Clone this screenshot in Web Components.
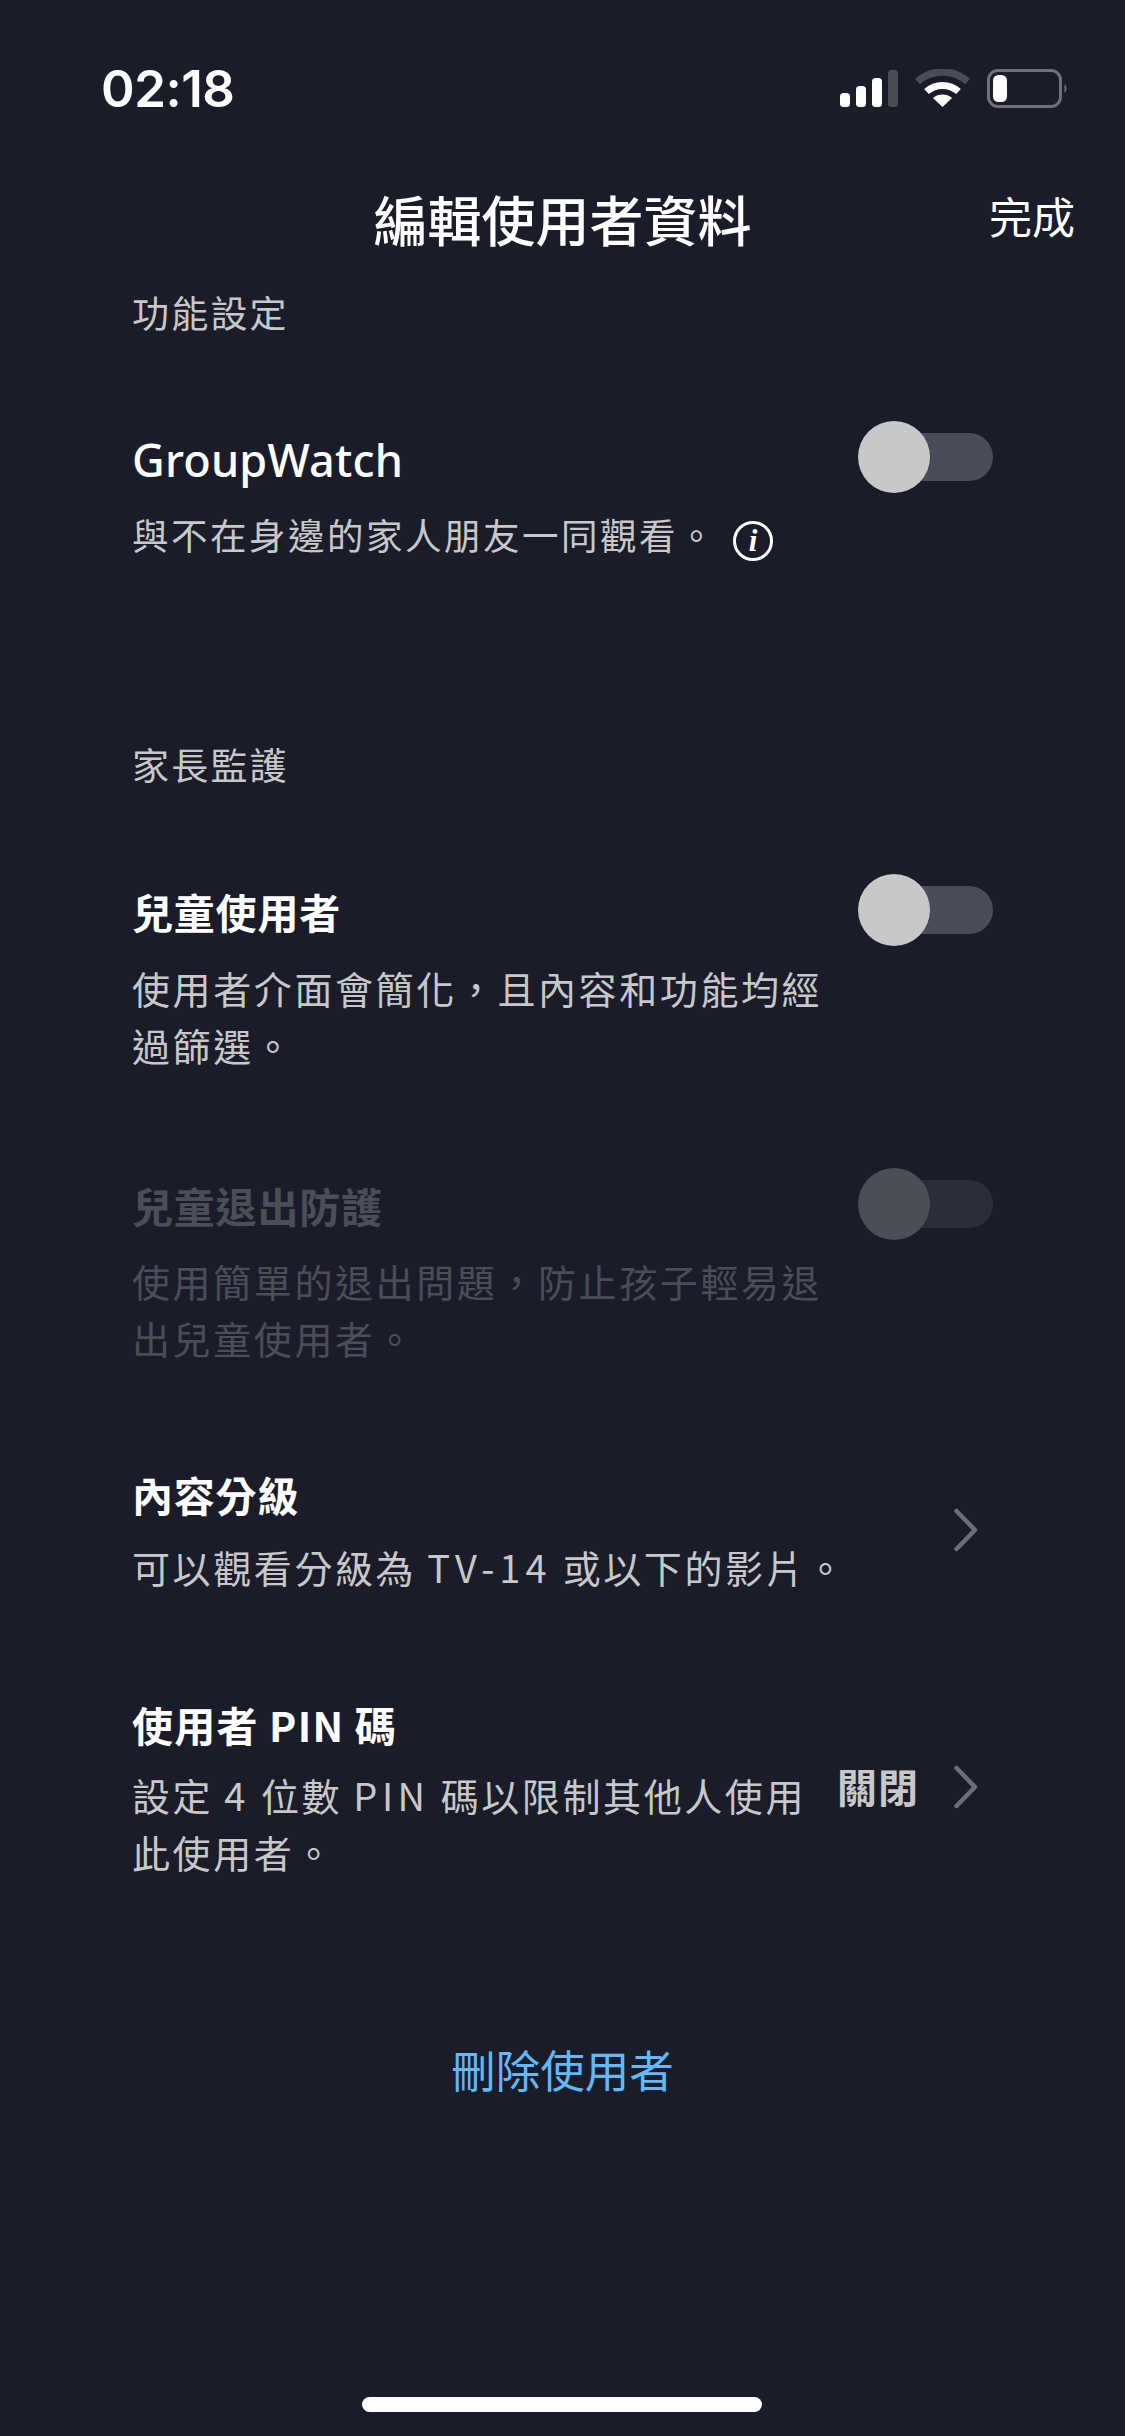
<!DOCTYPE html>
<html lang="zh-Hant"><head><meta charset="utf-8">
<style>
html,body{margin:0;padding:0;background:#1a1d29;}
body{width:1125px;height:2436px;overflow:hidden;font-family:"Noto Sans CJK TC","Noto Sans",sans-serif;color:#fff;}
</style></head><body>
<profile-screen>
  <status-bar></status-bar>
  <nav-header title="編輯使用者資料" action="完成"></nav-header>
  <section-label style="margin-top:19px">功能設定</section-label>
  <setting-row style="margin-top:89px;--gap:16px;--tg:-9px" toggle row-title="GroupWatch" latin>與不在身邊的家人朋友一同觀看。<info-icon></info-icon></setting-row>
  <section-label style="margin-top:173px">家長監護</section-label>
  <setting-row style="margin-top:88px;--gap:18px" toggle row-title="兒童使用者">使用者介面會簡化，且內容和功能均經<br>過篩選。</setting-row>
  <setting-row style="margin-top:102px;--gap:17px" toggle disabled row-title="兒童退出防護">使用簡單的退出問題，防止孩子輕易退<br>出兒童使用者。</setting-row>
  <setting-row style="margin-top:98px;--gap:14px" chevron row-title="內容分級">可以觀看分級為 <span style="letter-spacing:5px">TV-14</span> 或以下的影片。</setting-row>
  <setting-row style="margin-top:99px;--gap:12px;--tls:1.200px" chevron value="關閉" row-title="使用者 PIN 碼">設定 <span style="letter-spacing:4.500px">4</span> 位數 <span style="letter-spacing:4.500px">PIN</span> 碼以限制其他人使用<br>此使用者。</setting-row>
  <delete-action>刪除使用者</delete-action>
  <home-indicator></home-indicator>
</profile-screen>
<script>
function def(name, html){
  customElements.define(name, class extends HTMLElement{
    connectedCallback(){
      if(this.shadowRoot) return;
      const r=this.attachShadow({mode:'open'});
      r.innerHTML=typeof html==='function'?html(this):html;
    }
  });
}
def('profile-screen',`<style>:host{display:flex;flex-direction:column;height:2436px;position:relative}</style><slot></slot>`);
def('status-bar',`<style>
:host{display:flex;justify-content:space-between;align-items:center;height:175px;box-sizing:border-box;padding:3px 53px 0 101px;}
.t{font:600 51px/60px Inter,Roboto,sans-serif;letter-spacing:-.5px}
svg{display:block}
</style><span class="t">02:18</span>
<svg width="232" height="40" viewBox="0 -1 232 40">
<g fill="#fff"><rect x="0" y="23" width="10" height="14" rx="3.500"/><rect x="16" y="16" width="10" height="21" rx="3.500"/><rect x="32" y="8" width="10" height="29" rx="3.500"/></g>
<rect x="48" y="0" width="10" height="37" rx="3.500" fill="#4a4c56"/>
<path d="M77.500 11.500a38 38 0 0 1 50 0" fill="none" stroke="#4a4c56" stroke-width="7.500"/>
<path d="M86.500 21.500a24 24 0 0 1 32 0" fill="none" stroke="#fff" stroke-width="7"/>
<path d="M102.500 37l-9.500-9a15 15 0 0 1 19 0z" fill="#fff"/>
<rect x="148.500" y="0.500" width="72" height="36" rx="9.500" fill="none" stroke="#6f7079" stroke-width="3"/>
<rect x="153" y="5" width="14" height="27" rx="5.500" fill="#fff"/>
<path d="M224.500 14a6 6 0 0 1 0 9z" fill="#6f7079"/>
</svg>`);
def('nav-header',h=>`<style>
:host{display:grid;grid-template-columns:1fr auto 1fr;align-items:center;height:90px;}
.t{font-size:54px;line-height:90px;font-weight:500;grid-column:2;margin-top:-2px}
.a{font-size:43px;line-height:90px;justify-self:end;padding-right:50px;margin-top:-11px}
</style><span class="t">${h.getAttribute('title')}</span><span class="a">${h.getAttribute('action')}</span>`);
def('section-label',`<style>:host{display:block;padding-left:132px;font-size:37px;line-height:57px;letter-spacing:2.200px;color:#c8c8c8}</style><slot></slot>`);
def('toggle-switch',`<style>
:host{display:block;position:relative;width:135px;height:72px;}
.track{position:absolute;right:0;top:12px;width:115px;height:48px;border-radius:24px;background:var(--track,#4a4c5a)}
.knob{position:absolute;left:0;top:0;width:72px;height:72px;border-radius:50%;background:var(--knob,#c8c8c8)}
</style><div class="track"></div><div class="knob"></div>`);
def('chevron-icon',`<style>:host{display:block;width:28px;height:46px}svg{display:block}</style><svg width="28" height="46" viewBox="0 0 28 46"><path d="M4.500 4l18.500 19L4.500 42" fill="none" stroke="#6c6d76" stroke-width="4.500" stroke-linecap="round" stroke-linejoin="round"/></svg>`);
def('info-icon',`<style>
:host{display:inline-flex;align-items:center;justify-content:center;box-sizing:border-box;width:40px;height:40px;border:3px solid #fff;border-radius:50%;margin-left:16px;vertical-align:-1px;
font:italic 700 31px/1 "Liberation Serif",serif;color:#fff;letter-spacing:0}
</style>i`);
def('setting-row',h=>{
  const dis=h.hasAttribute('disabled'), latin=h.hasAttribute('latin'), tog=h.hasAttribute('toggle');
  const right=tog
    ?`<toggle-switch class="tg"></toggle-switch>`
    :`<div class="r">${h.hasAttribute('value')?`<span class="v">${h.getAttribute('value')}</span>`:''}<chevron-icon></chevron-icon></div>`;
  return `<style>
:host{display:flex;padding:0 132px;${dis?'--track:#2b2d38;--knob:#4b4e57;':''}}
.m{display:flex;flex-direction:column;gap:var(--gap,14px);flex:1;min-width:0}
.ti{font-size:${latin?'45px':'41px'};line-height:60px;font-weight:${latin?500:700};letter-spacing:${latin?'.2px':'var(--tls,.8px)'};color:${dis?'#4b4e57':'#fff'};
 font-family:${latin?'"Noto Sans",':''}"Noto Sans CJK TC",sans-serif}
.d{font-size:${latin?'36.500px':'38px'};line-height:57px;letter-spacing:${latin?'2.500px':'2.600px'};color:${dis?'#4b4e57':'#c8c8c8'};white-space:nowrap}
.tg{flex:none;align-self:flex-start;margin-top:var(--tg,-7px)}
.r{flex:none;display:flex;align-items:center;gap:33px;align-self:center;margin-right:13px}
.v{font-size:40px;font-weight:700;letter-spacing:1px;color:#c8c8c8;margin-top:-2px}
</style><div class="m"><div class="ti">${h.getAttribute('row-title')}</div><div class="d"><slot></slot></div></div>${right}`;
});
def('delete-action',`<style>:host{display:block;text-align:center;margin-top:159px;font-size:44.500px;line-height:60px;color:#62b9f8}</style><slot></slot>`);
def('home-indicator',`<style>:host{display:block;position:absolute;left:362px;bottom:24px;width:400px;height:15px;border-radius:7.500px;background:#fff}</style>`);
</script>
</body></html>
